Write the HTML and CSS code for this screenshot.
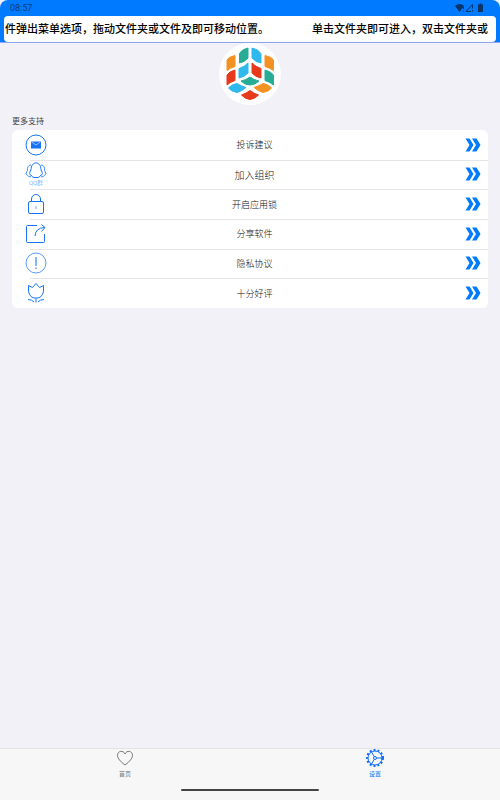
FILE: index.html
```html
<!DOCTYPE html>
<html lang="zh-CN">
<head>
    <meta charset="UTF-8">
    <meta name="viewport" content="width=device-width, initial-scale=1.0">
    <title>设置</title>
    <link rel="stylesheet" href="styles.css">
</head>
<body>

    <!-- Arrow shared by all rows -->
    <svg class="defs" aria-hidden="true">
        <symbol id="arrows" viewBox="0 0 16 14">
            <path d="M0.500 0.500H4.500L8.500 7 4.500 13.500H0.500L4.500 7zM7 0.500h4.500L15.500 7l-4 6.500H7L11 7z"/>
        </symbol>
    </svg>

    <header class="top">
        <div class="status">
            <span>08:57</span>
            <svg class="status-icons" viewBox="0 0 30 10" aria-hidden="true">
                <path d="M0 3Q4.500 -1 9 3L4.500 9z"/>
                <path d="M8.500 4v2M8.500 7.500v1" class="thin"/>
                <path d="M11 8.500L17.500 1.500v4M11 8.500h5M17.500 7v1.500" class="thin"/>
                <path d="M23 1.500h1.500V0.500h2v1H28V9h-5z"/>
            </svg>
        </div>
        <div class="ticker">
            <span>件弹出菜单选项，拖动文件夹或文件及即可移动位置。</span>
            <span>单击文件夹即可进入，双击文件夹或</span>
        </div>
    </header>

    <main>
        <div class="logo">
            <svg viewBox="0 0 62 62" role="img" aria-label="魔方">
                <path class="orange" d="M8 17Q9 14 16 12.500V23.500Q11 25 8 27.500z"/>
                <path class="teal" d="M20.500 10.500Q23 6 29 5V15Q26 19 20.500 20z"/>
                <path class="cyan" d="M33 5Q39 6 42 10.500V20Q36.500 19 33 15z"/>
                <path class="orange" d="M46 12.500Q53 14 54.500 17V27.500Q51 25 46 23.500z"/>
                <path class="red" d="M8 32Q10 28.500 16 27V37.500Q11 39 8 42z"/>
                <path class="cyan" d="M20 25.500Q25.500 24 29 20V30Q25.500 34 20 35z"/>
                <path class="red" d="M33 20Q37 24 42 25.500V35Q36.500 34 33 30z"/>
                <path class="teal" d="M46 27Q52 28.500 54.500 32V42Q51 39 46 37.500z"/>
                <path class="teal" d="M22 38Q27 37 31 34Q35 37 40 38Q36 42 31 42Q26 42 22 38z"/>
                <path class="cyan" d="M9.500 45Q13 41 18 40.500Q22 43 27 44.500Q23 48 18 49.500Q12 48.500 9.500 45z"/>
                <path class="orange" d="M35 44.500Q40 43 44 40.500Q49 41 52.500 45Q50 48.500 44 49.500Q39 48 35 44.500z"/>
                <path class="red" d="M22.500 52Q27 50.500 31 47.500Q35 50.500 39.500 52Q36 56 31 56.500Q26 56 22.500 52z"/>
            </svg>
        </div>

        <h1>更多支持</h1>

        <div class="list">
            <a class="row" href="#feedback">
                <svg class="icon" viewBox="0 0 24 24" aria-hidden="true">
                    <circle cx="12" cy="12" r="10"/>
                    <path class="fill" d="M7 8.500h10v7H7z"/>
                    <path class="flap" d="M7 8.500l5 3.500L17 8.500"/>
                </svg>
                <span>投诉建议</span>
                <svg class="arrows" aria-hidden="true"><use href="#arrows"/></svg>
            </a>
            <a class="row large" href="#group">
                <svg class="icon" viewBox="0 0 24 24" aria-hidden="true">
                    <path d="M7 8C7 -1.500 17 -1.500 17 8c2 3 1.500 5 0 5q-1 2-3 2.500h-4q-2-.5-3-2.500c-1.500 0-2-2 0-5z"/>
                    <path class="side" d="M7 3C4 3 3 6 3.500 8.500c-2 3-1.500 4-.5 4q1 2.500 4 2.500M17 3c3 0 4 3 3.500 5.500 2 3 1.500 4 .5 4q-1 2.500-4 2.500"/>
                    <text x="12" y="22.500" text-anchor="middle">QQ群</text>
                </svg>
                <span>加入组织</span>
                <svg class="arrows" aria-hidden="true"><use href="#arrows"/></svg>
            </a>
            <a class="row" href="#lock">
                <svg class="icon" viewBox="0 0 24 24" aria-hidden="true">
                    <rect x="4.500" y="9.500" width="15" height="12" rx="1.500"/>
                    <path d="M7.500 9.500V7a4.500 4.500 0 0 1 9 0v2.500"/>
                    <path class="light" d="M12 14v3"/>
                </svg>
                <span>开启应用锁</span>
                <svg class="arrows" aria-hidden="true"><use href="#arrows"/></svg>
            </a>
            <a class="row" href="#share">
                <svg class="icon" viewBox="0 0 24 24" aria-hidden="true">
                    <path d="M13 3.500H3.500q-1 0-1 1v15q0 1 1 1h16q1 0 1-1V12"/>
                    <path d="M11 14Q11.500 6 20.500 5.500M17.500 2.500l3.500 3-3.500 4"/>
                </svg>
                <span>分享软件</span>
                <svg class="arrows" aria-hidden="true"><use href="#arrows"/></svg>
            </a>
            <a class="row" href="#privacy">
                <svg class="icon light" viewBox="0 0 24 24" aria-hidden="true">
                    <circle cx="12" cy="12" r="10"/>
                    <path d="M12 6v9M12 16.500v1.500" stroke-width="1.500"/>
                </svg>
                <span>隐私协议</span>
                <svg class="arrows" aria-hidden="true"><use href="#arrows"/></svg>
            </a>
            <a class="row" href="#rate">
                <svg class="icon" viewBox="0 0 24 24" aria-hidden="true">
                    <path d="M4.500 4.500l4 2L12 2.500l3.500 4 4-2V10q-1 6-5.500 7h-4q-4.500-1-5.500-7z"/>
                    <path d="M12 17.500v4M4 18.500q4 0 6 2.500M20 18.500q-4 0-6 2.500"/>
                </svg>
                <span>十分好评</span>
                <svg class="arrows" aria-hidden="true"><use href="#arrows"/></svg>
            </a>
        </div>
    </main>

    <nav class="tabs">
        <a class="tab" href="#home">
            <svg viewBox="0 0 18 18" aria-hidden="true">
                <path d="M9 16Q1.500 10.500 1.500 6.500C1.500 1.500 7.500 1 9 5c1.500-4 7.500-3.500 7.500 1.500Q16.500 10.500 9 16z"/>
            </svg>
            <span>首页</span>
        </a>
        <a class="tab active" href="#settings">
            <svg viewBox="0 0 18 18" aria-hidden="true">
                <circle cx="9" cy="9" r="7"/>
                <circle class="teeth" cx="9" cy="9" r="8"/>
                <circle cx="9" cy="9" r="1.500"/>
                <path d="M10.500 9H16M8.300 7.700L5.500 3M8.300 10.300L5.500 15"/>
            </svg>
            <span>设置</span>
        </a>
    </nav>

</body>
</html>
```

FILE: styles.css
```css
* {
    box-sizing: border-box;
}

body {
    display: flex;
    flex-direction: column;
    min-height: 100vh;
    margin: 0;
    background-color: #f2f1f7;
    font-family: Roboto, "Noto Sans CJK SC", sans-serif;
    color: #333;
}

a {
    color: inherit;
    text-decoration: none;
}

.defs {
    position: absolute;
    width: 0;
    height: 0;
}

/* Blue header with the scrolling notice */
.top {
    padding: 0 4px;
    background-color: #007aff;
    border-bottom: 1px solid #8fa5ee;
    border-radius: 8px 8px 0 0;
}

.status {
    display: flex;
    justify-content: space-between;
    align-items: center;
    height: 16px;
    padding: 0 11px 0 6px;
    font-size: 9px;
    color: #083c78;
}

.status-icons {
    width: 30px;
    height: 10px;
    fill: #083468;
}

.status-icons .thin {
    fill: none;
    stroke: #083468;
}

.ticker {
    display: flex;
    gap: 43px;
    height: 26px;
    padding-left: 1px;
    border-radius: 4px;
    background-color: #fff;
    overflow: hidden;
    white-space: nowrap;
    font-size: 11px;
    line-height: 28px;
    font-weight: 500;
    color: #000;
}

.ticker span {
    flex: none;
}

main {
    flex: 1;
    padding: 0 12px;
}

.logo {
    width: 62px;
    height: 62px;
    margin: 0 auto;
    border-radius: 50%;
    background-color: #fff;
}

.logo svg {
    display: block;
    stroke-width: 1;
    stroke-linejoin: round;
}

.orange {
    fill: #f39222;
    stroke: #f39222;
}

.teal {
    fill: #27ad95;
    stroke: #27ad95;
}

.cyan {
    fill: #2fb9ec;
    stroke: #2fb9ec;
}

.red {
    fill: #e73a1d;
    stroke: #e73a1d;
}

h1 {
    margin: 11px 0 2px;
    font-size: 8px;
    line-height: 12px;
    font-weight: 400;
    color: #444;
}

/* Settings list */
.list {
    display: grid;
    grid-auto-rows: 1fr;
    min-height: 178px;
    border-radius: 6px;
    background-color: #fff;
}

.row {
    position: relative;
    display: grid;
    grid-template-columns: 24px 1fr 20px;
    align-items: center;
    padding: 0 7px 0 12px;
    font-size: 9px;
    font-weight: 300;
    text-align: center;
    color: #111;
}

.row.large {
    font-size: 10px;
}

/* Divider starts under the icon */
.row + .row::before {
    content: '';
    position: absolute;
    top: 0;
    left: 18px;
    right: 0;
    height: 1px;
    background-color: #e5e5e7;
}

.icon {
    width: 24px;
    height: 24px;
    fill: none;
    stroke: #1674f5;
}

.icon .fill {
    fill: #1674f5;
    stroke: none;
}

.icon .flap {
    stroke: #8fbdfb;
}

.icon .side {
    stroke: #3d8af7;
}

.light {
    stroke: #6da8fa;
}

.icon.light {
    stroke: #5c9cf8;
}

.icon text {
    fill: #4a93f8;
    stroke: none;
    font-size: 6px;
}

.arrows {
    justify-self: end;
    width: 16px;
    height: 14px;
    fill: #007aff;
}

/* Bottom tab bar */
.tabs {
    display: flex;
    height: 52px;
    border-top: 1px solid #e3e3e6;
    background-color: #f7f7f7;
    position: relative;
}

.tabs::after {
    content: '';
    position: absolute;
    bottom: 9px;
    left: 50%;
    width: 138px;
    height: 2px;
    margin-left: -69px;
    border-radius: 1px;
    background-color: #444;
}

.tab {
    flex: 1;
    display: flex;
    flex-direction: column;
    align-items: center;
    gap: 3px;
    font-size: 6px;
    line-height: 8px;
    color: #777;
}

.tab svg {
    width: 18px;
    height: 18px;
    fill: none;
    stroke: currentColor;
    stroke-width: 1;
}

.tab .teeth {
    stroke-width: 2;
    stroke-dasharray: 2 2;
}

.tab.active {
    color: #0a6cf5;
}
```
